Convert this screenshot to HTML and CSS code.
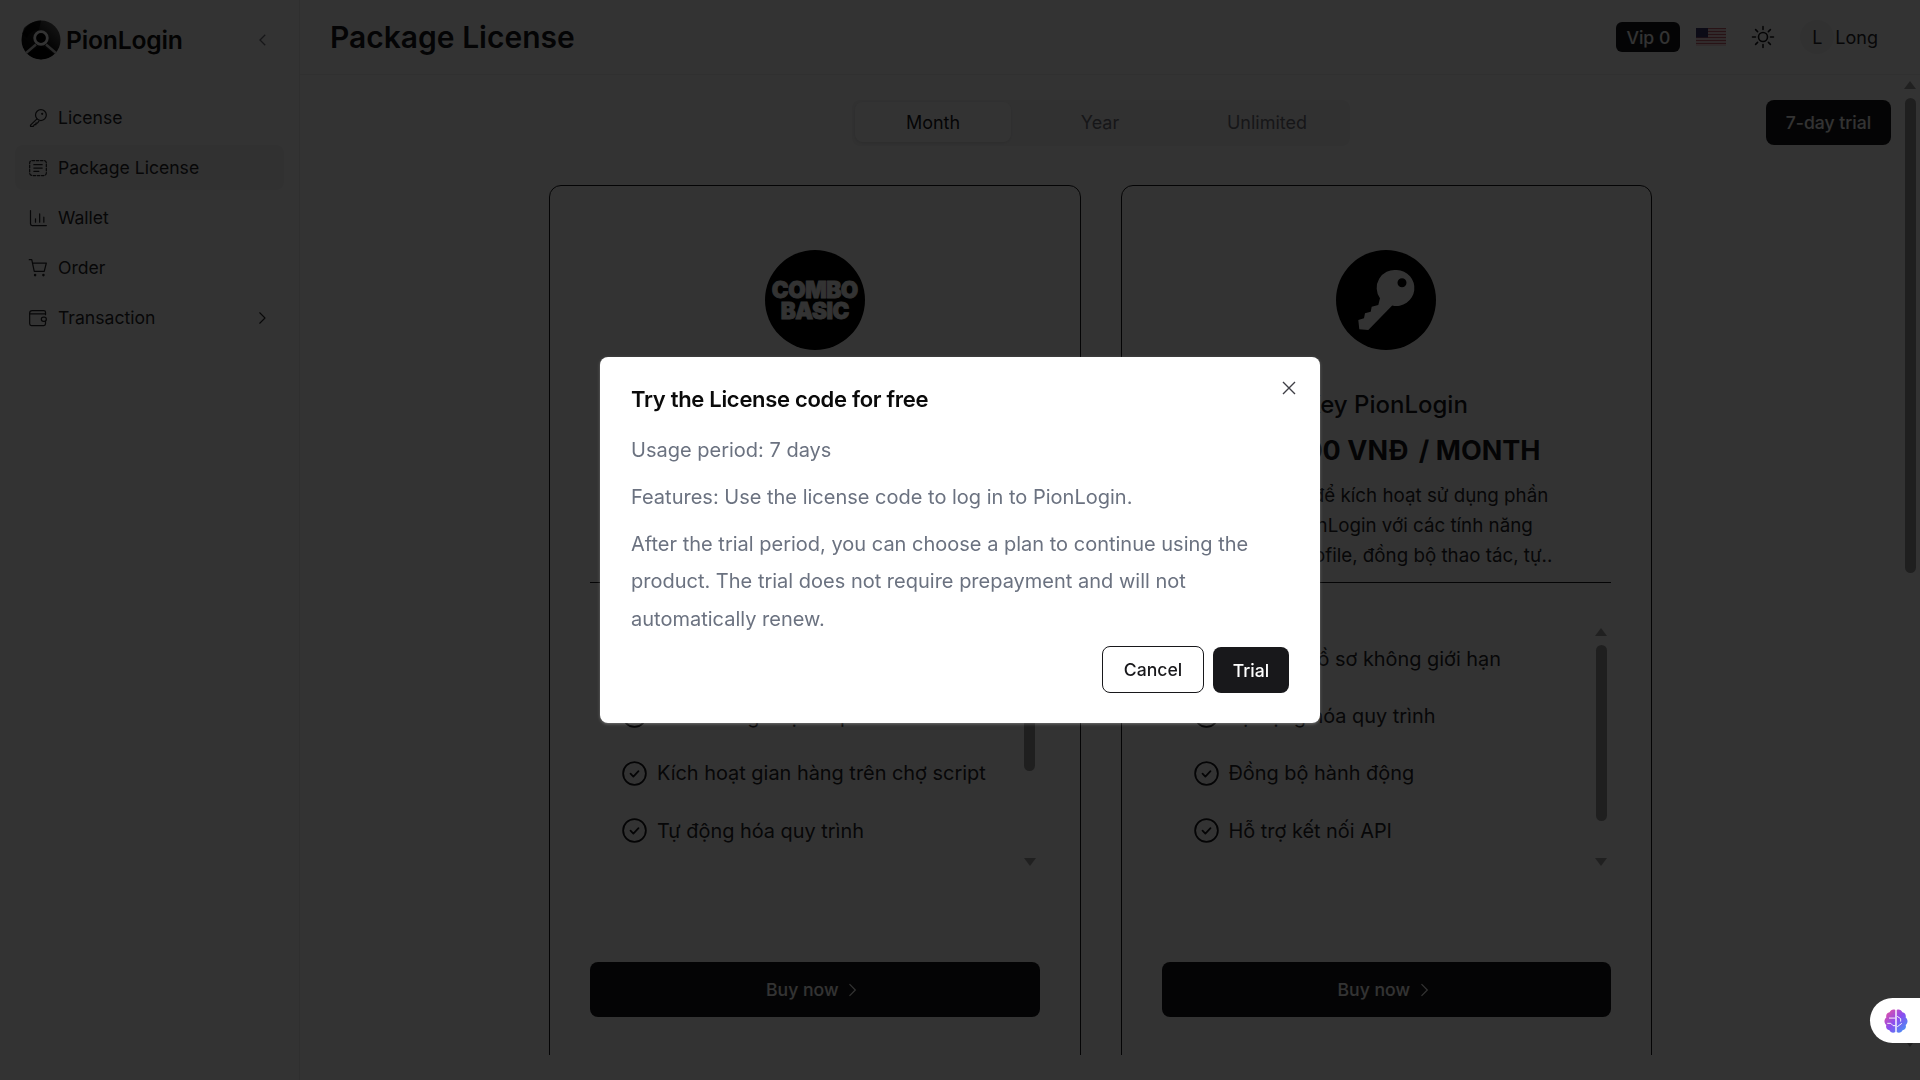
FILE: index.html
```html
<!DOCTYPE html>
<html lang="en">
<head>
<meta charset="utf-8">
<title>Package License</title>
<link rel="stylesheet" href="styles.css">
</head>
<body>
<div class="app">
  <aside class="sidebar">
    <div class="brand">
      <svg class="brand-mark" viewBox="0 0 40 40">
        <defs><linearGradient id="lg" x1="1" y1="0" x2="0" y2="1"><stop offset="0" stop-color="#777"/><stop offset=".45" stop-color="#1a1a1a"/><stop offset="1" stop-color="#000"/></linearGradient></defs>
        <circle cx="20" cy="20" r="19.5" fill="url(#lg)"/>
        <path d="M3 8C8 3 14 1 20 .5L18 10C12 10 8 13 6 18L1 14Z" fill="#000" opacity=".75"/>
        <path d="M5 33 15 24.500M35 33 25 24.500" stroke="#d0d0d0" stroke-width="2.400" fill="none"/>
        <path d="M7 34 20 25l13 9a19 19 0 0 1-26 0Z" fill="#000"/>
        <circle cx="20" cy="18" r="6.300" fill="#000" stroke="#fff" stroke-width="2.800"/>
      </svg>
      <span class="brand-name">PionLogin</span>
      <svg class="collapse" viewBox="0 0 24 24"><path d="M15 5l-7 7 7 7"/></svg>
    </div>
    <nav class="nav">
      <a class="nav-item"><svg viewBox="0 0 24 24"><circle cx="15.500" cy="8.500" r="6.500"/><path d="M10.800 13 3 20.500V22h3.500l1-2h2v-2h2l1.600-2.200"/><circle cx="17" cy="7" r=".6"/></svg><span>License</span></a>
      <a class="nav-item active"><svg viewBox="0 0 24 24"><rect x="2" y="3" width="20" height="18" rx="3" stroke-dasharray="3 2"/><path d="M7 8h10M7 12h10M7 16h6"/></svg><span>Package License</span></a>
      <a class="nav-item"><svg viewBox="0 0 24 24"><path d="M3 3v16a2 2 0 0 0 2 2h17M9 17v-4M14 17V7M19 17v-6"/></svg><span>Wallet</span></a>
      <a class="nav-item"><svg viewBox="0 0 24 24"><path d="M1.500 2h3l3 14h12l2.500-10H5.500"/><circle cx="8.500" cy="20.500" r=".8"/><circle cx="18.500" cy="20.500" r=".8"/></svg><span>Order</span></a>
      <a class="nav-item"><svg viewBox="0 0 24 24"><path d="M21 8V5a2 2 0 0 0-2-2H5a3 3 0 0 0-3 3v13a2 2 0 0 0 2 2h15a2 2 0 0 0 2-2v-3"/><path d="M2 7h19"/><rect x="16" y="11" width="6" height="5" rx="2.500"/></svg><span>Transaction</span><svg class="nav-chev" viewBox="0 0 24 24"><path d="M9 5l7 7-7 7"/></svg></a>
    </nav>
  </aside>
  <main class="main">
    <header class="topbar">
      <h1 class="page-title">Package License</h1>
      <div class="top-actions">
        <span class="vip">Vip 0</span>
        <svg class="flag" viewBox="0 0 30 18">
          <rect width="30" height="18" fill="#c9606f"/>
          <path d="M0 2h30M0 5h30M0 8h30M0 11h30M0 14h30M0 17h30" stroke="#fff" stroke-width="1.300"/>
          <rect width="12" height="9.500" fill="#3c3b6e"/>
        </svg>
        <svg class="sun" viewBox="0 0 24 24"><circle cx="12" cy="12" r="4.500"/><path d="M12 1.500v3M12 19.500v3M1.500 12h3M19.500 12h3M4.600 4.600l2 2M17.400 17.400l2 2M4.600 19.400l2-2M17.400 6.600l2-2"/></svg>
        <div class="user"><span class="avatar">L</span><span class="user-name">Long</span></div>
      </div>
    </header>
    <div class="content">
      <div class="scroller">
        <div class="tabs-row">
          <div class="tabs">
            <span class="tab selected">Month</span>
            <span class="tab">Year</span>
            <span class="tab">Unlimited</span>
          </div>
          <button class="trial-btn">7-day trial</button>
        </div>
        <div class="cards">
          <article class="card">
            <div class="plan-icon"><span class="combo">COMBO<br>BASIC</span></div>
            <h2 class="plan-name">Combo Basic</h2>
            <div class="plan-price">299,000 <span class="unit">VNĐ</span> / MONTH</div>
            <p class="plan-desc">Gói cơ bản để kích hoạt sử dụng phần<br>mềm PionLogin với các tính năng<br>khởi tạo profile, đồng bộ thao tác, tự..</p>
            <div class="features">
              <ul class="feature-list">
                <li class="feature"><svg class="check" viewBox="0 0 22 22"><circle cx="11" cy="11" r="10"/><path d="M7.500 11.200l2.500 2.500 4.500-4.700"/></svg>Quản lý hồ sơ không giới hạn</li>
                <li class="feature"><svg class="check" viewBox="0 0 22 22"><circle cx="11" cy="11" r="10"/><path d="M7.500 11.200l2.500 2.500 4.500-4.700"/></svg>Chức năng chợ script</li>
                <li class="feature"><svg class="check" viewBox="0 0 22 22"><circle cx="11" cy="11" r="10"/><path d="M7.500 11.200l2.500 2.500 4.500-4.700"/></svg>Kích hoạt gian hàng trên chợ script</li>
                <li class="feature"><svg class="check" viewBox="0 0 22 22"><circle cx="11" cy="11" r="10"/><path d="M7.500 11.200l2.500 2.500 4.500-4.700"/></svg>Tự động hóa quy trình</li>
              </ul>
              <div class="bar"><i class="arrow up"></i><i class="thumb thumb-left"></i><i class="arrow down"></i></div>
            </div>
            <button class="buy">Buy now <svg viewBox="0 0 24 24"><path d="M9 5l7 7-7 7"/></svg></button>
          </article>
          <article class="card">
            <div class="plan-icon">
              <svg class="key" viewBox="0 0 100 100"><path fill-rule="evenodd" d="M60.700 20a18 18 0 1 1-4.500 35.500L32.300 80l-9-.7-1-9.300 5.700-1.700 1-5 5.700-1.600 1-5 6.600-1.700 1.700-6.700A18 18 0 0 1 60.700 20Zm5.300 8.200a4.500 4.500 0 1 0 0 9 4.500 4.500 0 0 0 0-9Z"/></svg>
            </div>
            <h2 class="plan-name">Key PionLogin</h2>
            <div class="plan-price">199,000 <span class="unit">VNĐ</span> / MONTH</div>
            <p class="plan-desc">Key dùng để kích hoạt sử dụng phần<br>mềm PionLogin với các tính năng<br>khởi tạo profile, đồng bộ thao tác, tự..</p>
            <div class="features">
              <ul class="feature-list">
                <li class="feature"><svg class="check" viewBox="0 0 22 22"><circle cx="11" cy="11" r="10"/><path d="M7.500 11.200l2.500 2.500 4.500-4.700"/></svg>Quản lý hồ sơ không giới hạn</li>
                <li class="feature"><svg class="check" viewBox="0 0 22 22"><circle cx="11" cy="11" r="10"/><path d="M7.500 11.200l2.500 2.500 4.500-4.700"/></svg>Tự động hóa quy trình</li>
                <li class="feature"><svg class="check" viewBox="0 0 22 22"><circle cx="11" cy="11" r="10"/><path d="M7.500 11.200l2.500 2.500 4.500-4.700"/></svg>Đồng bộ hành động</li>
                <li class="feature"><svg class="check" viewBox="0 0 22 22"><circle cx="11" cy="11" r="10"/><path d="M7.500 11.200l2.500 2.500 4.500-4.700"/></svg>Hỗ trợ kết nối API</li>
              </ul>
              <div class="bar"><i class="arrow up"></i><i class="thumb thumb-right"></i><i class="arrow down"></i></div>
            </div>
            <button class="buy">Buy now <svg viewBox="0 0 24 24"><path d="M9 5l7 7-7 7"/></svg></button>
          </article>
        </div>
      </div>
      <div class="page-bar"><i class="arrow up"></i><i class="thumb thumb-page"></i><i class="arrow down"></i></div>
    </div>
  </main>
</div>

<div class="overlay">
  <section class="modal">
    <svg class="modal-close" viewBox="0 0 14 14"><path d="M1 1l12 12M13 1 1 13"/></svg>
    <h3 class="modal-title">Try the License code for free</h3>
    <p class="modal-line first">Usage period: 7 days</p>
    <p class="modal-line">Features: Use the license code to log in to PionLogin.</p>
    <p class="modal-line">After the trial period, you can choose a plan to continue using the product. The trial does not require prepayment and will not automatically renew.</p>
    <div class="modal-actions">
      <button class="btn-cancel">Cancel</button>
      <button class="btn-trial">Trial</button>
    </div>
  </section>
</div>

<div class="assistant">
  <svg viewBox="0 0 24 24">
    <defs><linearGradient id="bg" x1="0" y1="0" x2="1" y2="1"><stop offset="0" stop-color="#f0509a"/><stop offset=".5" stop-color="#8a4df0"/><stop offset="1" stop-color="#3aa0f5"/></linearGradient></defs>
    <path fill="url(#bg)" d="M11.400 2.500v19c-1.800 1-4.300.4-5-1.600-2.200-.2-3.500-2.400-2.700-4.400C1.600 14 1.600 10.500 3.700 9 3.100 6.800 4.400 4.800 6.500 4.500c.8-2 3.100-3 4.900-2Zm1.200 0c1.800-1 4.100 0 4.900 2 2.100.3 3.400 2.300 2.800 4.500 2.100 1.500 2.100 5 0 6.500.8 2-.5 4.200-2.700 4.400-.7 2-3.200 2.600-5 1.600Z"/>
    <path d="M6 9.500h5.400M4.500 14h3l2 2h2M13 8l3 2v2.500M13 17l4-3" stroke="#fff" stroke-width=".8" fill="none"/>
  </svg>
</div>
</body>
</html>
```
FILE: styles.css
```css
* { box-sizing: border-box; }
html, body { margin: 0; height: 100%; overflow: hidden; }
body { background: #fff; color: #18181b; font-family: Inter, "Noto Sans", sans-serif; font-size: 18px; }
h1, h2, h3, p, ul { margin: 0; padding: 0; }
ul { list-style: none; }
button { font-family: inherit; cursor: pointer; }

.app { display: flex; height: 1080px; }

.sidebar { width: 300px; flex: none; border-right: 1px solid #e8e8e8; padding: 20px 15px 0; }
.brand { display: flex; align-items: center; height: 40px; padding-left: 6px; }
.brand-mark { width: 40px; height: 40px; flex: none; }
.brand-name { margin-left: 5px; font-size: 24.700px; font-weight: 600; letter-spacing: -.2px; color: #111; }
.collapse { width: 18px; height: 18px; margin-left: auto; margin-right: 12px; fill: none; stroke: #71717a; stroke-width: 1.800; }

.nav { margin-top: 35px; display: flex; flex-direction: column; gap: 5px; }
.nav-item { display: flex; align-items: center; gap: 10px; height: 45px; padding: 0 13px; border-radius: 8px; color: #27272a; font-size: 17.600px; }
.nav-item svg { width: 20px; height: 20px; flex: none; fill: none; stroke: #27272a; stroke-width: 1.500; stroke-linecap: round; stroke-linejoin: round; }
.nav-item.active { background: #f4f4f5; }
.nav-item .nav-chev { width: 18px; height: 18px; margin-left: auto; }

.main { flex: 1; min-width: 0; display: flex; flex-direction: column; }
.topbar { height: 75px; flex: none; display: flex; align-items: center; justify-content: space-between; border-bottom: 1px solid #eee; padding: 0 42px 0 30px; }
.page-title { font-size: 30px; font-weight: 600; color: #18181b; }
.top-actions { display: flex; align-items: center; }
.vip { height: 30px; width: 64px; display: flex; align-items: center; justify-content: center; background: #18181b; color: #fff; border-radius: 6px; font-size: 17.600px; font-weight: 500; }
.flag { width: 30px; height: 18px; margin-left: 16px; }
.sun { width: 24px; height: 24px; margin-left: 25px; fill: none; stroke: #18181b; stroke-width: 1.600; stroke-linecap: round; }
.user { display: flex; align-items: center; margin-left: 25px; }
.avatar { width: 34px; height: 34px; border-radius: 50%; background: #f4f4f5; display: flex; align-items: center; justify-content: center; color: #27272a; font-size: 18px; }
.user-name { margin-left: 1px; color: #27272a; font-size: 18px; }

.content { display: flex; height: 980px; flex: none; }
.scroller { flex: 1; min-width: 0; overflow: hidden; padding-top: 25px; }
.tabs-row { position: relative; display: flex; justify-content: center; height: 46px; padding-left: 2px; }
.tabs { display: flex; gap: 11px; padding: 2px 5px 4px 3px; width: 498px; background: #f4f4f5; border-radius: 8px; }
.tab { width: 156px; display: flex; align-items: center; justify-content: center; color: #71717a; font-size: 18px; font-weight: 400; border-radius: 8px; }
.tab.selected { background: #fff; color: #18181b; box-shadow: 0 1px 3px rgba(0,0,0,.1); }
.trial-btn { position: absolute; right: 9px; top: 0; width: 125px; height: 45px; background: #18181b; color: #fff; border: 0; border-radius: 8px; font-size: 17.600px; font-weight: 500; }

.cards { display: flex; justify-content: center; gap: 40px; margin-top: 39px; padding-left: 1px; }
.card { width: 531.500px; height: 900px; flex: none; border: 1px solid #18181b; border-radius: 12px; padding: 64px 40px 0; display: flex; flex-direction: column; }
.plan-icon { width: 100px; height: 100px; margin: 0 auto; flex: none; border-radius: 50%; background: #000; display: flex; align-items: center; justify-content: center; }
.combo { color: #fff; font-size: 22.500px; line-height: 21px; font-weight: 900; text-align: center; letter-spacing: -.5px; -webkit-text-stroke: .8px #fff; }
.key { width: 100px; height: 100px; fill: #fff; }
.plan-name { margin-top: 38px; font-size: 24px; line-height: 34px; font-weight: 500; text-align: center; color: #18181b; }
.plan-price { margin-top: 9px; font-size: 27px; line-height: 40px; font-weight: 700; text-align: center; color: #18181b; }
.unit { margin-right: 4px; }
.plan-desc { margin-top: 10px; height: 101px; font-size: 18.750px; line-height: 30px; text-align: center; color: #27272a; overflow: hidden; }
.features { display: flex; height: 288px; border-top: 1px solid #18181b; }
.feature-list { flex: 1; padding: 47px 0 0 32px; }
.feature { display: flex; align-items: center; gap: 10px; height: 57.300px; font-size: 19.900px; color: #27272a; }
.check { width: 25px; height: 25px; flex: none; fill: none; stroke: #18181b; stroke-width: 1.600; stroke-linecap: round; stroke-linejoin: round; }
.buy { height: 55px; margin-top: 92px; flex: none; background: #18181b; color: #fff; border: 0; border-radius: 8px; font-size: 17.600px; font-weight: 500; display: flex; align-items: center; justify-content: center; gap: 4px; }
.buy svg { width: 20px; height: 20px; margin-right: 1px; fill: none; stroke: #fff; stroke-width: 1.400; }

.bar, .page-bar { display: flex; flex-direction: column; align-items: center; flex: none; width: 20px; }
.bar { height: 244px; margin-top: 43px; background: #fcfcfc; }
.page-bar { padding: 4px 0 4px; }
.arrow { flex: none; width: 0; height: 0; border-left: 6.500px solid transparent; border-right: 6.500px solid transparent; }
.arrow.up { border-bottom: 8px solid #a0a0a0; margin-top: 2px; }
.arrow.down { border-top: 8px solid #a0a0a0; margin-top: auto; margin-bottom: 4px; }
.thumb { width: 11px; background: #9b9b9b; border-radius: 6px; margin-top: 9px; }
.thumb-left { height: 126px; }
.thumb-right { height: 176px; }
.thumb-page { height: 475px; }

.overlay { position: fixed; inset: 0; background: rgba(0,0,0,.8); display: flex; align-items: center; justify-content: center; }
.modal { position: relative; width: 720px; background: #fff; border-radius: 8px; padding: 28px 31px 30px; box-shadow: 0 1px 3px rgba(255,255,255,.3); }
.modal-close { position: absolute; top: 24px; right: 24px; width: 14px; height: 14px; fill: none; stroke: #3f3f46; stroke-width: 1.400; }
.modal-title { font-size: 22px; line-height: 28px; font-weight: 600; color: #0a0a0a; letter-spacing: -.3px; }
.modal-line { margin-top: 9.500px; font-size: 20px; line-height: 37.500px; color: #6b7280; }
.modal-line.first { margin-top: 19px; }
.modal-actions { display: flex; justify-content: flex-end; gap: 9px; margin-top: 8px; }
.btn-cancel { width: 102px; height: 47px; background: #fff; border: 1px solid #18181b; border-radius: 8px; color: #18181b; font-size: 17.600px; font-weight: 500; }
.btn-trial { width: 76px; height: 46px; margin-top: 1px; background: #18181b; color: #fff; border: 0; border-radius: 8px; font-size: 17.600px; font-weight: 500; }

.assistant { position: fixed; right: 0; top: 998px; width: 50px; height: 45px; background: #fff; border-radius: 23px 0 0 23px; display: flex; align-items: center; padding-left: 12px; }
.assistant svg { width: 28px; height: 28px; }
```
